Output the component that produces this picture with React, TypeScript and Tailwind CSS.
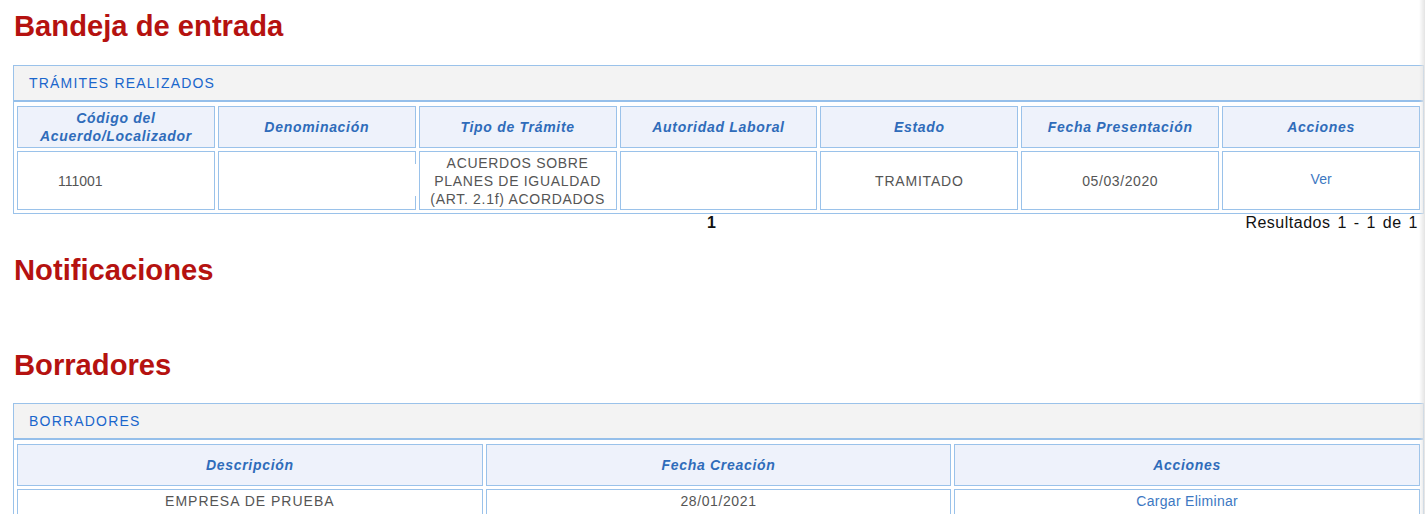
import React from 'react';

// Column headings for the two listings
const TRAMITES_COLS = [
  ['Código del', 'Acuerdo/Localizador'],
  ['Denominación'],
  ['Tipo de Trámite'],
  ['Autoridad Laboral'],
  ['Estado'],
  ['Fecha Presentación'],
  ['Acciones'],
];

const BORRADORES_COLS = ['Descripción', 'Fecha Creación', 'Acciones'];

const headCell =
  'flex flex-col items-center justify-center h-[42px] border border-[#9ac2ea] bg-[#eef2fb] text-[14px] leading-[18px] font-bold italic tracking-[0.7px] text-[#2f6cba] text-center';

const bodyCell =
  'flex flex-col border border-[#9ac2ea] bg-white text-[14px] leading-[18px] text-[#555]';

const SectionTitle: React.FC<{ children: React.ReactNode; className?: string }> = ({ children, className }) => (
  <h1 className={'pl-[14px] text-[29.2px] leading-[33px] font-bold text-[#b51210] ' + (className ?? '')}>
    {children}
  </h1>
);

const PanelHeader: React.FC<{ title: string }> = ({ title }) => (
  <div className="h-[36px] flex items-center pl-[15px] bg-[#f3f3f3] border-b-2 border-[#95bfea] text-[14px] tracking-[1.2px] text-[#1a66cc]">
    {title}
  </div>
);

export default function App() {
  return (
    <div className="relative min-h-[514px] bg-white font-['Liberation_Sans',Arial,sans-serif]">
      <SectionTitle className="pt-[10px]">Bandeja de entrada</SectionTitle>

      <div className="ml-[13px] mt-[22px] w-[1411px] border border-[#9ac2ea]">
        <PanelHeader title="TRÁMITES REALIZADOS" />
        <div className="grid grid-cols-7 gap-[3px] px-[3px] pt-[4px] pb-[3px]">
          {TRAMITES_COLS.map((lines) => (
            <div key={lines.join(' ')} className={headCell}>
              {lines.map((l) => (
                <span key={l}>{l}</span>
              ))}
            </div>
          ))}

          <div className={bodyCell + ' justify-center h-[59px] pl-[40px]'}>111001</div>
          <div className={bodyCell + ' justify-center h-[59px] relative'}>
            {/* the source page leaves a gap in this cell's right border */}
            <div className="absolute right-[-1px] top-[12px] h-[32px] w-[1px] bg-white" />
          </div>
          <div className={bodyCell + ' justify-center h-[59px] items-center text-center tracking-[0.7px]'}>
            <span>ACUERDOS SOBRE</span>
            <span>PLANES DE IGUALDAD</span>
            <span>(ART. 2.1f) ACORDADOS</span>
          </div>
          <div className={bodyCell + ' justify-center h-[59px]'} />
          <div className={bodyCell + ' justify-center h-[59px] items-center tracking-[0.8px]'}>TRAMITADO</div>
          <div className={bodyCell + ' justify-center h-[59px] items-center tracking-[0.6px]'}>05/03/2020</div>
          <div className={bodyCell + ' justify-center h-[59px] items-center pb-[3px]'}>
            <a className="text-[#3d78c2] cursor-pointer">Ver</a>
          </div>
        </div>
      </div>

      <div className="ml-[13px] w-[1411px] flex items-center text-[16px] leading-[18px] text-[#111]">
        <div className="flex-1" />
        <span className="font-bold pr-[8px]">1</span>
        <div className="flex-1 flex justify-end pr-[6px]">
          <span className="tracking-[0.5px] [word-spacing:2px]">Resultados 1 - 1 de 1</span>
        </div>
      </div>

      <SectionTitle className="mt-[22px]">Notificaciones</SectionTitle>
      <div className="h-[62px]" />

      <SectionTitle>Borradores</SectionTitle>

      <div className="ml-[13px] mt-[21px] w-[1411px] border border-[#9ac2ea]">
        <PanelHeader title="BORRADORES" />
        <div className="grid grid-cols-3 gap-[3px] px-[3px] pt-[4px] pb-[3px]">
          {BORRADORES_COLS.map((c) => (
            <div key={c} className={headCell}>
              {c}
            </div>
          ))}
          <div className={bodyCell + ' h-[40px] pt-[2px] items-center tracking-[1px]'}>EMPRESA DE PRUEBA</div>
          <div className={bodyCell + ' h-[40px] pt-[2px] items-center tracking-[0.6px]'}>28/01/2021</div>
          <div className={bodyCell + ' h-[40px] pt-[2px] items-center tracking-[0.3px]'}>
            <span>
              <a className="text-[#3d78c2] cursor-pointer">Cargar</a>{' '}
              <a className="text-[#3d78c2] cursor-pointer">Eliminar</a>
            </span>
          </div>
        </div>
      </div>

      {/* scroll shadow on the right edge */}
      <div className="pointer-events-none absolute right-0 top-0 h-full w-[6px] bg-linear-to-r from-transparent to-[#e4e4e4]" />
    </div>
  );
}
